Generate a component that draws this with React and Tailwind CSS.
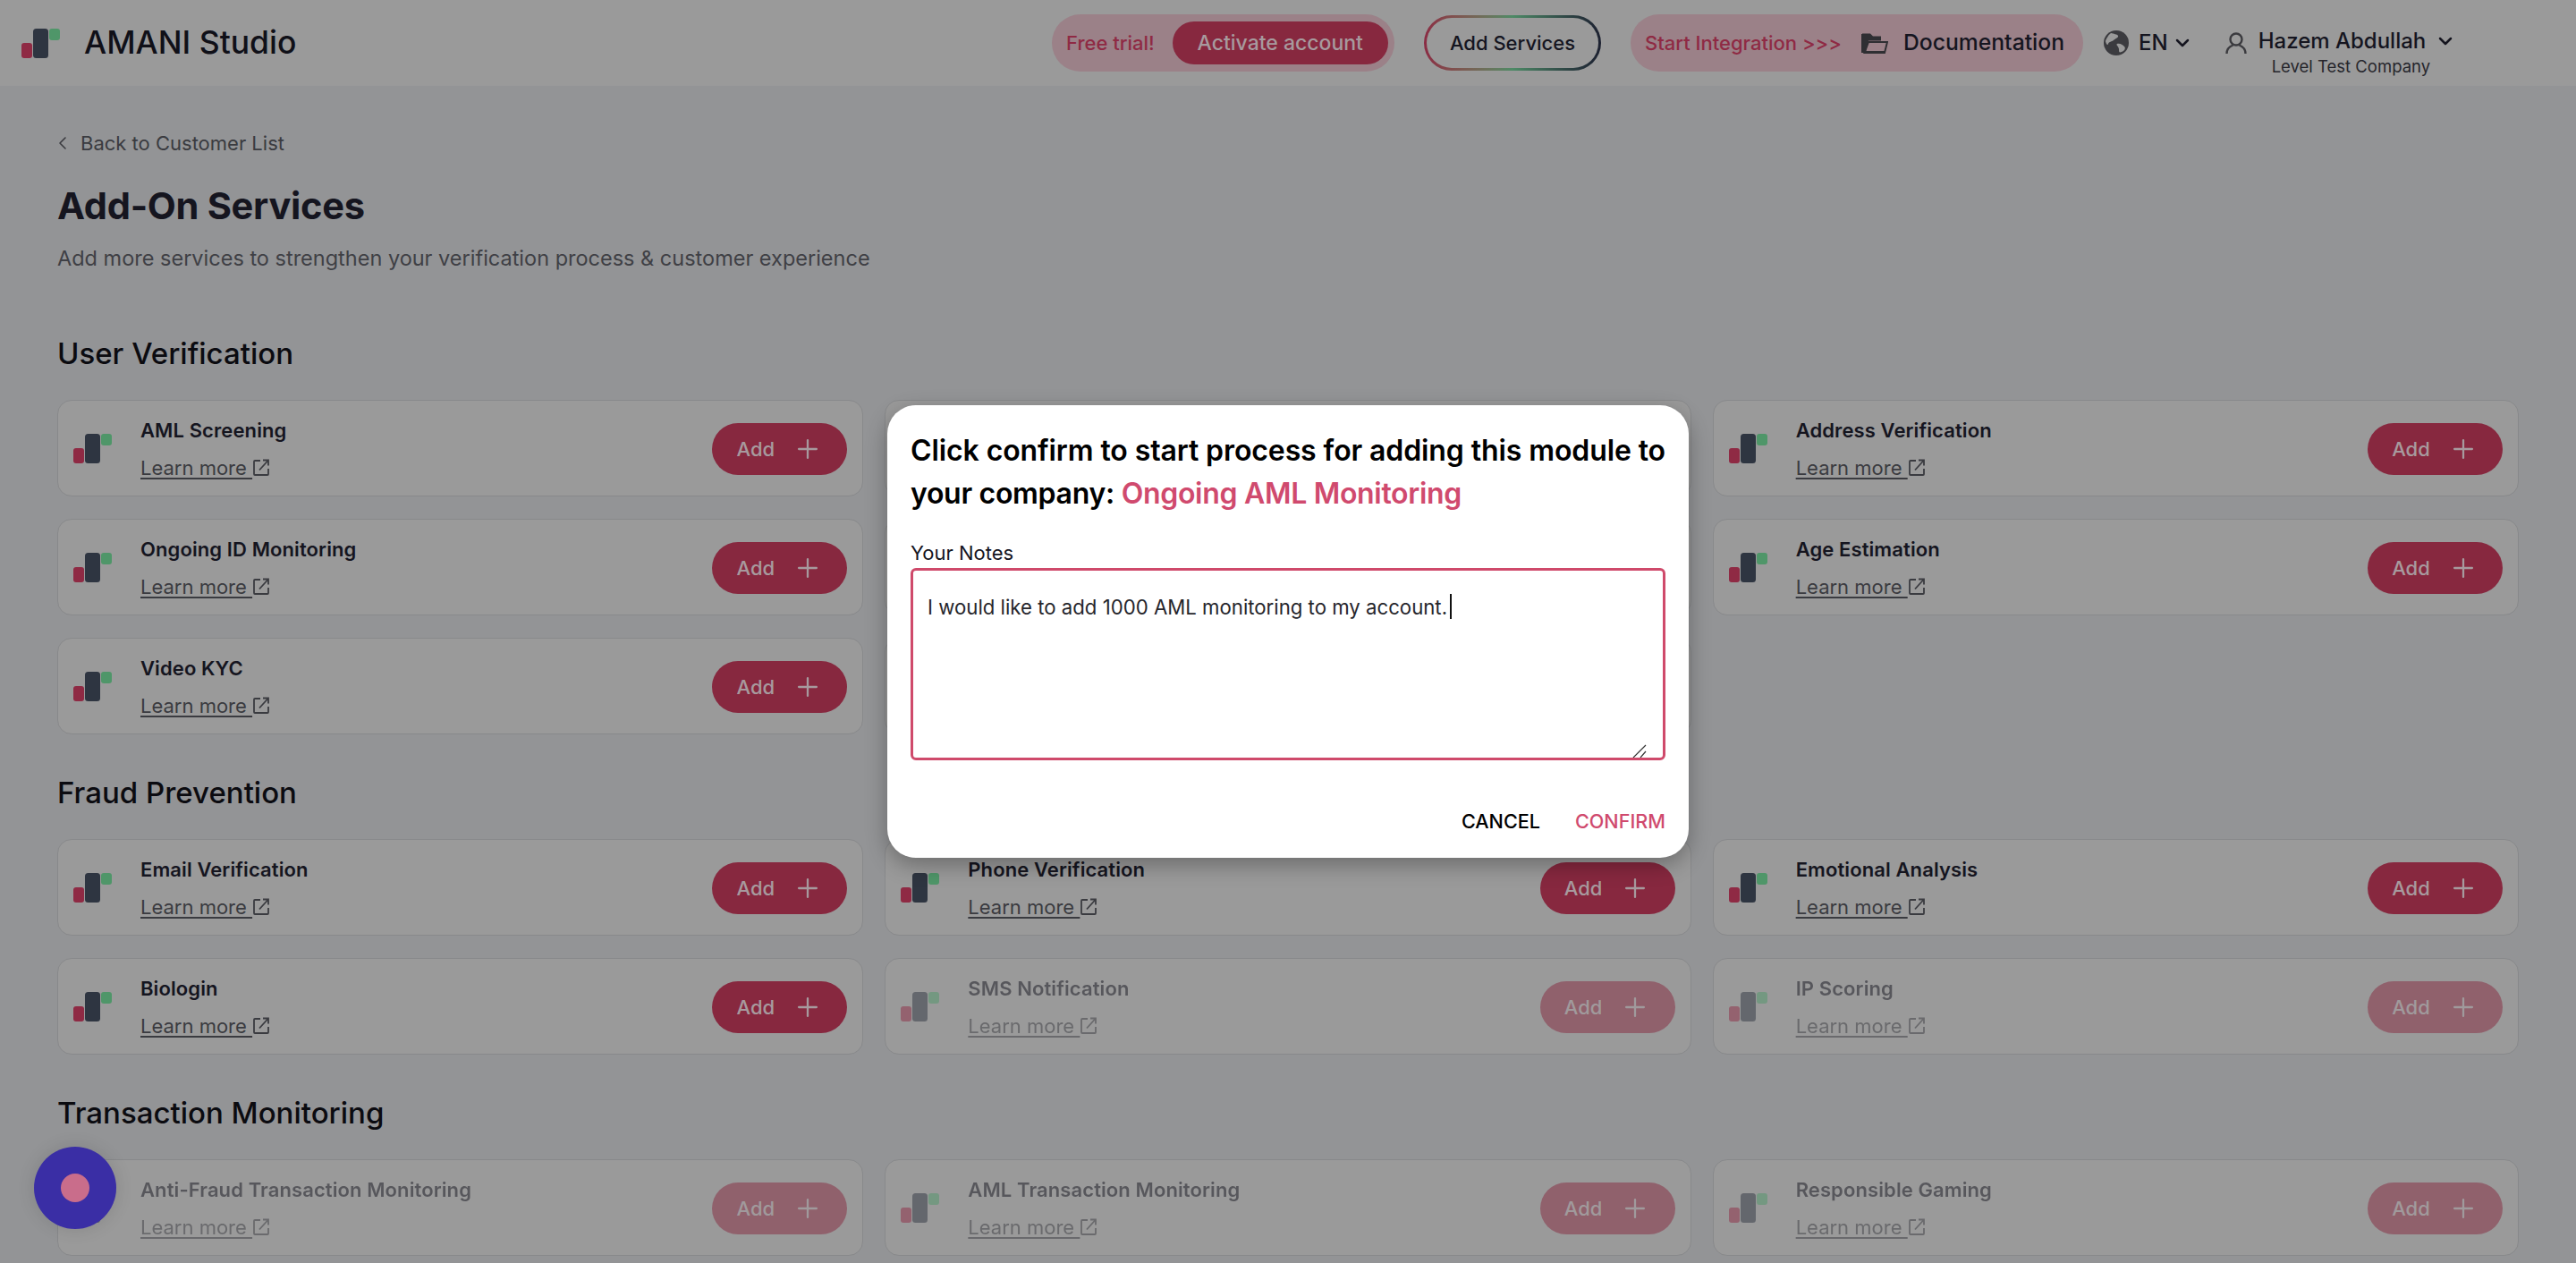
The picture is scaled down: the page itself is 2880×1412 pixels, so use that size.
import React from "react";
import { Plus, ChevronDown, ChevronLeft } from "lucide-react";

const Logo = () => (
  <svg width="43" height="33" viewBox="0 0 43 33" className="shrink-0">
    <rect x="0" y="16" width="12" height="17" rx="3" fill="#8f2a44" />
    <rect x="13" y="0" width="17" height="33" rx="3.5" fill="#2e3541" />
    <rect x="31" y="0" width="12" height="13" rx="3" fill="#4f9669" />
  </svg>
);

const LinkIcon = () => (
  <svg width="18" height="20" viewBox="0 0 18 20" fill="none" stroke="currentColor" strokeWidth="1.8" className="ml-[1px] shrink-0">
    <path d="M8 2H2a1 1 0 0 0-1 1v14a1 1 0 0 0 1 1h14a1 1 0 0 0 1-1v-6" />
    <path d="M11 1.5h6v6M17 1.5 7 12.5" />
  </svg>
);

const Card = ({ name, dim, empty }) => (
  <div className="h-[108px] rounded-[16px] border border-[#88898b] bg-[#9a9a9a] pl-[17px] pr-[17px] flex items-center">
    {!empty && (
      <div className={`flex items-center flex-1 h-full ${dim ? "opacity-50" : ""}`}>
        <Logo />
        <div className="ml-[32px] flex-1 min-w-0 flex flex-col pt-[2px]">
          <div className="text-[22px] leading-[30px] font-semibold text-[#15151f] tracking-[0.1px]">{name}</div>
          <div className="mt-[12px] flex items-center text-[22px] leading-[30px] text-[#3a3b40]">
            <span className="underline underline-offset-[3px] whitespace-pre">Learn more </span>
            <LinkIcon />
          </div>
        </div>
        <div className="mt-[2px] w-[151px] h-[58px] rounded-[29px] bg-[#87283f] flex items-center justify-center gap-[20px] text-[#a79a9e] text-[22px] font-medium">
          <span>Add</span>
          <Plus size={34} strokeWidth={1.6} />
        </div>
      </div>
    )}
  </div>
);

const Section = ({ title, cards }) => (
  <section>
    <h2 className="text-[33px] leading-[44px] font-medium text-[#0b0b10]">{title}</h2>
    <div className="mt-[30px] grid grid-cols-3 gap-x-[24px] gap-y-[25px]">
      {cards.map((c, i) =>
        c ? <Card key={i} {...c} /> : <div key={i} />
      )}
    </div>
  </section>
);

export default function App() {
  return (
    <div className="relative h-[1412px] w-[2880px] overflow-hidden bg-[#939496] font-['Inter',sans-serif]">
      <header className="h-[96px] bg-[#9a9a9a] flex items-center pl-[24px]">
        <Logo />
        <div className="ml-[27px] text-[35.5px] font-medium text-[#101018] w-[238px] whitespace-nowrap">AMANI Studio</div>
        <div className="ml-[844px] h-[64px] w-[383px] rounded-full bg-[#9b8188] flex items-center pl-[16px] text-[23px] font-medium">
          <span className="text-[#8f2a44] text-[22px]">Free trial!</span>
          <span className="ml-[20px] h-[48px] w-[241px] rounded-full bg-[#87283f] text-[#a79a9e] flex items-center justify-center">Activate account</span>
        </div>
        <div className="ml-[33px] h-[62px] w-[198px] rounded-full p-[3px] bg-gradient-to-r from-[#8a2a43] via-[#4d8a66] to-[#1c2030]">
          <div className="h-full w-full rounded-full bg-[#9a9a9a] flex items-center justify-center text-[22px] font-medium text-[#15151f]">Add Services</div>
        </div>
        <div className="ml-[33px] h-[64px] w-[506px] rounded-full bg-[#9b8188] flex items-center pl-[16px] text-[22px] font-medium whitespace-nowrap">
          <span className="text-[#8f2a44] w-[220px]">Start Integration &gt;&gt;&gt;</span>
          <svg width="30" height="24" viewBox="0 0 30 24" className="ml-[22px] shrink-0">
            <path d="M1 1.5h9l3 3h9v5H8L5 22H1z" fill="#2f2f33" />
            <path d="M8 11h21l-3 12H3.5z" fill="none" stroke="#2f2f33" strokeWidth="2" />
            <path d="M1 2v20h25" fill="none" stroke="#2f2f33" strokeWidth="2" />
          </svg>
          <span className="ml-[17px] text-[24.7px] text-[#15151f]">Documentation</span>
        </div>
        <svg width="28" height="28" viewBox="0 0 28 28" className="ml-[23px] shrink-0">
          <circle cx="14" cy="14" r="14" fill="#3b3b3f" />
          <path d="M8 3c3 1 7 1 8 3s-3 3-5 5-5 1-6 4-3-2-3-3 3-7 6-9zM15 15c3-1 6 1 8 3s0 5-3 6-3 0-3-3-4-5-2-6z" fill="#9a9a9a" />
        </svg>
        <span className="ml-[11px] text-[24px] font-medium text-[#15151f]">EN</span>
        <ChevronDown size={24} strokeWidth={2.5} className="ml-[4px] text-[#15151f]" />
        <svg width="24" height="25" viewBox="0 0 24 25" fill="none" stroke="#3b3b3f" strokeWidth="2.4" className="ml-[36px] shrink-0">
          <circle cx="12" cy="8" r="6.5" />
          <path d="M1.5 24c0-5 3-8 7-9.5M22.5 24c0-5-3-8-7-9.5" />
        </svg>
        <div className="ml-[13px] relative">
          <div className="flex items-center text-[24px] font-medium text-[#15151f] whitespace-nowrap mt-[-4px]">
            <span>Hazem Abdullah</span>
            <ChevronDown size={24} strokeWidth={2.5} className="ml-[10px]" />
          </div>
          <div className="absolute left-[15px] top-[30px] text-[18.5px] leading-[24px] text-[#26262c] whitespace-nowrap">Level Test Company</div>
        </div>
      </header>

      <main className="px-[64px]">
        <div className="mt-[48px] flex items-center text-[22px] leading-[32px] text-[#3a3b40]">
          <ChevronLeft size={24} strokeWidth={1.6} className="ml-[-6px]" />
          <span className="ml-[8px]">Back to Customer List</span>
        </div>
        <h1 className="mt-[26px] text-[41.6px] leading-[56px] font-bold tracking-[-0.3px] text-[#15151f]">Add-On Services</h1>
        <p className="mt-[13px] text-[23.5px] leading-[36px] text-[#3f4045]">Add more services to strengthen your verification process &amp; customer experience</p>

        <div className="mt-[66px]">
          <Section title="User Verification" cards={[
            { name: "AML Screening" }, { empty: true }, { name: "Address Verification" },
            { name: "Ongoing ID Monitoring" }, { empty: true }, { name: "Age Estimation" },
            { name: "Video KYC" }, { empty: true }, null,
          ]} />
        </div>
        <div className="mt-[43px]">
          <Section title="Fraud Prevention" cards={[
            { name: "Email Verification" }, { name: "Phone Verification" }, { name: "Emotional Analysis" },
            { name: "Biologin" }, { name: "SMS Notification", dim: true }, { name: "IP Scoring", dim: true },
          ]} />
        </div>
        <div className="mt-[43px]">
          <Section title="Transaction Monitoring" cards={[
            { name: "Anti-Fraud Transaction Monitoring", dim: true }, { name: "AML Transaction Monitoring", dim: true }, { name: "Responsible Gaming", dim: true },
          ]} />
        </div>
      </main>

      <div className="absolute left-[38px] top-[1282px] w-[92px] h-[92px] rounded-full bg-[#3a2ea5] flex items-center justify-center shadow-[0_0_20px_rgba(0,0,0,0.12)]">
        <div className="w-[32px] h-[32px] rounded-full bg-[#c96d8b]" />
      </div>

      <div className="absolute left-[992px] top-[453px] w-[896px] h-[506px] rounded-[32px] bg-white px-[26px] pt-[27px] shadow-[0_8px_24px_rgba(0,0,0,0.3)]">
        <div className="text-[32px] leading-[48px] font-semibold text-black whitespace-nowrap">
          <div className="tracking-[-0.1px]">Click confirm to start process for adding this module to</div>
          <div className="tracking-[-0.3px]">your company: <span className="text-[#d04a6e]">Ongoing AML Monitoring</span></div>
        </div>
        <div className="mt-[27px] text-[22px] leading-[30px] text-[#15151f]">Your Notes</div>
        <div className="relative mt-[2px]">
          <textarea
            className="block w-[844px] h-[215px] resize-none rounded-[6px] border-[3px] border-[#cf4a6b] px-[16px] pt-[25px] text-[22.2px] leading-[32px] text-[#26262c] outline-none"
            defaultValue="I would like to add 1000 AML monitoring to my account."
          />
          <span className="absolute left-[603px] top-[29px] h-[28px] w-[2px] bg-[#111]" />
          <svg width="16" height="15" viewBox="0 0 16 15" className="absolute left-[807px] top-[197px]" stroke="#333" strokeWidth="1.2">
            <path d="M1 15 15 1M9 15l6-7" />
          </svg>
        </div>
        <div className="mt-[53px] flex justify-end gap-[39px] text-[21.6px] leading-[30px] font-medium">
          <span className="text-black">CANCEL</span>
          <span className="text-[#d04a6e]">CONFIRM</span>
        </div>
      </div>
    </div>
  );
}
